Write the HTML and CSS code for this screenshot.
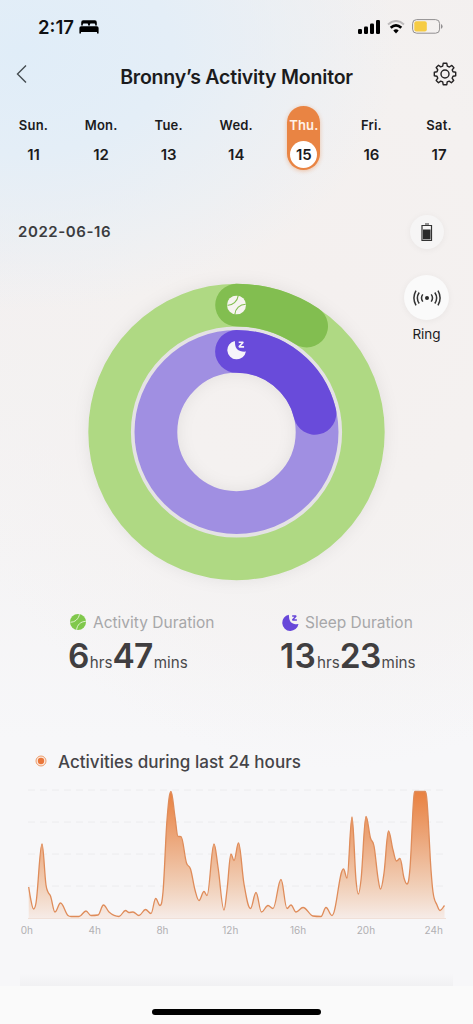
FILE: index.html
```html
<!DOCTYPE html>
<html lang="en">
<head>
<meta charset="utf-8">
<title>Bronny’s Activity Monitor</title>
<link rel="stylesheet" href="styles.css">
</head>
<body>
<svg width="0" height="0" class="defs">
  <symbol id="ball" viewBox="0 0 20 20"><circle cx="10" cy="10" r="10" fill="currentColor"/><path d="M.5 10.2C6 10.5 11 6 11.8.3M8.3 19.7C8.8 13.5 13.5 9.3 19.7 9.2" fill="none" stroke="var(--seam)" stroke-width="1.2"/></symbol>
  <symbol id="moon" viewBox="0 0 20 20"><path d="M8 .9C8.4 3 8 6.6 10.2 9.3 12.4 11.8 16 12.1 19.4 11.9A9.6 9.6 0 1 1 8 .9Z" fill="currentColor"/><path d="M12 2.3h4.6l-4.3 4.8h5.2" fill="none" stroke="currentColor" stroke-width="1.7" stroke-linejoin="bevel"/></symbol>
</svg>
<main class="screen">
  <header class="status">
    <div class="clock"><span>2:17</span>
      <svg width="20" height="14" viewBox="0 0 20 14"><path d="M2.2 5.6V2.5Q2.2.3 4.2.3H15.8Q17.8.3 17.8 2.5V5.6H16.2V4.4Q16.2 3.5 15.3 3.5H11.8Q10.9 3.5 10.9 4.4V5.6H9.1V4.4Q9.1 3.5 8.2 3.5H4.7Q3.8 3.5 3.8 4.4V5.6ZM2.2 6.2H17.8Q19.6 6.2 19.6 8V13.4H18V11.9H2V13.4H.4V8Q.4 6.2 2.2 6.2Z"/></svg>
    </div>
    <div class="signals">
      <svg width="22" height="15" viewBox="0 0 22 15"><rect y="9" width="4" height="5" rx="1.2"/><rect x="6" y="6.5" width="4" height="7.5" rx="1.2"/><rect x="12" y="3.5" width="4" height="10.5" rx="1.2"/><rect x="18" y="0" width="4" height="14" rx="1.2"/></svg>
      <svg width="18" height="14" viewBox="0 0 18 14" fill="none"><path d="M1 4.5Q9-2.5 17 4.5" stroke="#bdbabb" stroke-width="2"/><path d="M3.7 7.7Q9 3 14.3 7.7" stroke="#000" stroke-width="2.7"/><path d="M6.3 10.5Q9 8.2 11.7 10.5L9 13.6Z" fill="#000"/></svg>
      <svg width="31" height="15" viewBox="0 0 31 15"><rect x=".6" y=".6" width="27" height="13.6" rx="4" fill="none" stroke="#918f90" stroke-width="1"/><rect x="2.3" y="2.3" width="12.5" height="10.2" rx="2" fill="#f6cc45"/><path d="M29 5Q30.6 5.6 30.6 7.4T29 9.8Z" fill="#918f90"/></svg>
    </div>
  </header>
  <nav class="titlebar">
    <svg width="12" height="20" viewBox="0 0 12 20"><path d="M10 1.5 1.5 10 10 18.5" fill="none" stroke="#444c50" stroke-width="1.4"/></svg>
    <h1>Bronny’s Activity Monitor</h1>
    <svg width="24" height="24" viewBox="0 0 24 24" fill="none" stroke="#242223" stroke-width="1.4" stroke-linejoin="round"><circle cx="12" cy="12" r="4"/><path d="M10.2 1.3H13.8L14.3 4.1 16.4 5 18.8 3.4 20.9 5.7 19.2 7.9 20 9.8 22.7 10.3V13.7L20 14.2 19.1 16.2 20.7 18.5 18.4 20.7 16.2 19.1 14.2 19.9 13.8 22.7H10.2L9.7 19.9 7.7 19.1 5.5 20.7 3.2 18.4 4.8 16.2 4 14.2 1.3 13.7V10.3L4 9.8 4.8 7.8 3.2 5.5 5.5 3.3 7.7 4.9 9.7 4.1Z"/></svg>
  </nav>
  <section class="week">
    <div class="day"><span>Sun.</span><b>11</b></div>
    <div class="day"><span>Mon.</span><b>12</b></div>
    <div class="day"><span>Tue.</span><b>13</b></div>
    <div class="day"><span>Wed.</span><b>14</b></div>
    <div class="day active"><span>Thu.</span><b>15</b></div>
    <div class="day"><span>Fri.</span><b>16</b></div>
    <div class="day"><span>Sat.</span><b>17</b></div>
  </section>
  <section class="overview">
    <time>2022-06-16</time>
    <svg class="rings" width="300" height="300" viewBox="-150 -150 300 300" fill="none">
      <circle r="104" stroke="#e4e2e4" stroke-width="5"/>
      <circle r="126.9" stroke="#afd983" stroke-width="42.6"/>
      <circle r="80.6" stroke="#a08fe2" stroke-width="42.8"/>
      <path d="M0-126.9A126.9 126.9 0 0 1 70.2-105.8" stroke="#82be50" stroke-width="42.6" stroke-linecap="round"/>
      <path d="M0-80.6A80.6 80.6 0 0 1 78.4-18.7" stroke="#694bda" stroke-width="42.8" stroke-linecap="round"/>
      <g class="on-green"><use href="#ball" x="-9.5" y="-136.5" width="19" height="19"/></g>
      <g class="on-purple"><use href="#moon" x="-9.5" y="-92" width="19.5" height="19.5"/></g>
    </svg>
    <aside class="tools">
      <div class="tool small"><svg width="12" height="19" viewBox="0 0 12 19"><path d="M4 1H8M1 2.5H10.5V17.5H1Z" fill="none" stroke="#333" stroke-width="1.2"/><path d="M2 6.5H9.5V16.4H2Z" fill="#292929"/></svg></div>
      <div class="tool"><svg width="28" height="18" viewBox="-14 -9 28 18" fill="none" stroke="#343434" stroke-width="1.5"><circle r="2" fill="#292929" stroke="none"/><path d="M-4.2-3.6Q-6.8 0-4.2 3.6M-7.8-5.5Q-11.5 0-7.8 5.5M-11-7.3Q-15.2 0-11 7.3M4.2-3.6Q6.8 0 4.2 3.6M7.8-5.5Q11.5 0 7.8 5.5M11-7.3Q15.2 0 11 7.3"/></svg></div>
      <span>Ring</span>
    </aside>
  </section>
  <section class="totals">
    <div class="total activity"><h2><svg width="16" height="16"><use href="#ball"/></svg><span>Activity Duration</span></h2><p><b>6</b><i>hrs</i><b>47</b><i class="mins">mins</i></p></div>
    <div class="total sleep"><h2><svg width="17" height="17"><use href="#moon"/></svg><span>Sleep Duration</span></h2><p><b>13</b><i>hrs</i><b>23</b><i class="mins">mins</i></p></div>
  </section>
  <section class="chart">
    <h2><svg width="12" height="12" viewBox="0 0 12 12"><circle cx="6" cy="6" r="5" fill="#fbe9df" stroke="#ee9c6a"/><circle cx="6" cy="6" r="3.2" fill="#e9763a"/></svg><span>Activities during last 24 hours</span></h2>
    <svg class="plot" width="418" height="134" viewBox="28 787 418 134">
      <defs><linearGradient id="fill" gradientUnits="userSpaceOnUse" x1="0" y1="791" x2="0" y2="919"><stop stop-color="#e9803f"/><stop offset=".4" stop-color="#ecaa80"/><stop offset=".75" stop-color="#f1d0b9"/><stop offset="1" stop-color="#f6ece8"/></linearGradient></defs>
      <path d="M28 790H446M28 822H446M28 854H446M28 886H446" stroke="#ececee" stroke-dasharray="7 5"/>
      <path id="area" fill="url(#fill)"/><path d="M28 918.5H446" stroke="#f0e0d8"/>
      <path id="line" fill="none" stroke="#df8c5a" stroke-width="1.3"/>
    </svg>
    <div class="axis"><span>0h</span><span>4h</span><span>8h</span><span>12h</span><span>16h</span><span>20h</span><span>24h</span></div>
  </section>
  <div class="next-edge"></div>
  <footer><div class="home"></div></footer>
</main>
<script src="chart.js"></script>
</body>
</html>
```
FILE: styles.css
```css
* { box-sizing: border-box; }
body { margin: 0; font-family: Inter, "Liberation Sans", sans-serif; color: #1b1b1d; }
h1, h2, p { margin: 0; }
i { font-style: normal; }
svg { display: block; flex: none; }
.defs { position: absolute; }
.screen { width: 473px; height: 1024px; overflow: hidden; display: flex; flex-direction: column;
  background: radial-gradient(ellipse 380px 260px at 20px 50px, #e0edf8 0%, #e4eef7 40%, #eaf0f600 100%), radial-gradient(ellipse 420px 480px at 330px 290px, #f4f0ef 0%, #f4f1f0 45%, #f7f7f900 100%), linear-gradient(#f2efef 0, #f2efef 200px, #f5f4f5 560px, #f7f7f9 740px); }
.status { height: 50px; padding: 17px 30px 0 38px; display: flex; justify-content: space-between; }
.clock { display: flex; gap: 5px; font-size: 18.5px; line-height: 21px; font-weight: 600; color: #101114; letter-spacing: 0; }
.clock svg { margin-top: 3px; }
.signals { display: flex; gap: 7px; padding-top: 3px; }
.signals svg:last-child { margin-top: -1px; }
.titlebar { height: 55px; padding: 0 16px; display: flex; align-items: center; justify-content: space-between; padding-bottom: 7px; }
.titlebar h1 { font-size: 19.5px; font-weight: 600; letter-spacing: -.2px; line-height: 28px; padding-top: 5px; margin-left: 12px; }
.week { height: 80px; display: grid; grid-template-columns: repeat(7, 33px); column-gap: 34.6px; padding: 1px 0 0 17px; }
.day { height: 64px; border-radius: 17px; display: flex; flex-direction: column; align-items: center; padding-top: 10px; white-space: nowrap; }
.day span { font-size: 13px; font-weight: 600; line-height: 18px; letter-spacing: .2px; }
.day b { width: 27px; height: 27px; margin-top: 7px; border-radius: 50%; text-align: center; font-size: 15px; font-weight: 600; line-height: 27px; }
.day.active { background: #e98443; box-shadow: 0 1px 4px #e9844370; }
.day.active span { color: #fff2e9; }
.day.active b { background: #fff; }
.overview { height: 422px; display: grid; grid-template-columns: 86px 300px 87px; padding-top: 29px; }
.overview time { padding: 8px 0 0 18px; font-size: 15px; line-height: 20px; font-weight: 600; color: #3b3c3f; white-space: nowrap; letter-spacing: .58px; }
.rings { margin-top: 68px; margin-left: .5px; filter: drop-shadow(0 0 8px #00000012); transform: translateX(-.5px); }
.on-green { color: #f6f4f0; --seam: #82be50; }
.on-purple { color: #f6f4fa; }
.tools { display: flex; flex-direction: column; align-items: center; padding: 1px 6px 0 0; }
.tool { width: 45px; height: 45px; border-radius: 50%; background: #fafafa; box-shadow: 0 1px 7px #0000000d; display: grid; place-items: center; }
.tool.small { width: 34px; height: 34px; margin-bottom: 26px; background: #f6f5f5; }
.tools span { font-size: 13.5px; line-height: 18px; margin-top: 5px; }
.totals { height: 139px; padding: 4px 0 0 68px; display: grid; grid-template-columns: 212px 160px; }
.total h2 { display: flex; align-items: center; height: 22px; gap: 7px; padding-left: 2px; font-size: 15.5px; font-weight: 400; color: #a7a7a9; white-space: nowrap; }
.activity { --seam: #e3f4d5; }
.activity h2 svg { color: #80c84c; }
.sleep h2 { gap: 6px; }
.sleep h2 svg { color: #6747d9; }
.total p { display: flex; align-items: baseline; line-height: 40px; margin-top: 3px; color: #403e40; white-space: nowrap; }
.total b { font-size: 33.5px; font-weight: 600; letter-spacing: -.7px; }
.sleep b:first-child { letter-spacing: .3px; }
.total i { font-size: 15.2px; color: #4a494b; margin-left: 1px; }
.total .mins { margin-left: 1px; }
.chart { height: 228px; padding-top: 1px; }
.chart h2 { display: flex; align-items: center; gap: 11px; height: 28px; padding-left: 35px; font-size: 17.05px; font-weight: 500; color: #454448; }
.plot { margin: 12px 0 0 28px; }
.axis { display: grid; grid-template-columns: repeat(7, 67.8px); margin-left: -7px; padding-top: 2px; font-size: 10px; line-height: 14px; color: #b1b0b3; text-align: center; }
.next-edge { height: 12px; margin: 0 20px; background: linear-gradient(#f7f7f900, #f1f1f3); }
footer { flex: 1; background: #fafafa; display: flex; justify-content: center; padding-top: 23px; }
.home { width: 169px; height: 6px; border-radius: 3px; background: #000; }
```
FILE: chart.js
```js
const samples = [
  [28.7,887],[30.5,898],[33.5,909],[36,903],[42,844],[46,885],[48,892],[50.5,896],[55,912],[60.5,903],[68,915.5],[71,916.5],[79,916.5],
  [86,911],[91,915.5],[98,915],[103.5,905],[109,912],[119,916.5],[125.5,910.5],[129,912.5],[133,912],[139,915.5],[145.5,909.5],[151,913.5],
  [155.7,898.5],[160,905.5],[163,892],[167,820],[171,791.5],[175,817],[178,836.4],[181,836.6],[186.5,863],[190.5,869],[195,890],[199,900.5],
  [204,891.5],[207,895.5],[214,844],[218,867],[224,910],[227,890],[231,854],[234,860.5],[238.5,843],[244,884],[250.5,908.5],[256,892.5],
  [261.5,912],[268,905.5],[273,908.5],[281,879.5],[287,908.5],[291,905],[296,912],[303,907.5],[313,916],[321,916.5],[326,907.5],[332,915.5],
  [343.5,869],[347,878],[352,817],[356,880],[358.3,894],[361,880],[366,816.5],[370.5,838],[374,846],[378,878],[380.5,889],[384,873],
  [388.5,831],[393,850],[396.5,861],[400,858.5],[404,878],[407,884],[410,868],[414,795],[415,791.5],[425,791.5],[426.5,796],[431,870],
  [433,892],[437,905],[440,910.5],[444.5,905.5]
];

// Flat tangents at peaks and clamped ones elsewhere keep the curve from overshooting.
const slope = (a, b) => (b[1] - a[1]) / (b[0] - a[0]);
const tangents = samples.map((p, i) => {
  if (i === 0) return slope(p, samples[1]);
  if (i === samples.length - 1) return slope(samples[i - 1], p);
  const a = slope(samples[i - 1], p), b = slope(p, samples[i + 1]);
  if (a * b <= 0) return 0;
  return Math.sign(a) * Math.min(Math.abs(a + b) / 2, 2.5 * Math.abs(a), 2.5 * Math.abs(b));
});
let d = `M${samples[0]}`;
for (let i = 1; i < samples.length; i++) {
  const p = samples[i - 1], q = samples[i], h = (q[0] - p[0]) * 0.38;
  d += `C${p[0] + h},${p[1] + tangents[i - 1] * h} ${q[0] - h},${q[1] - tangents[i] * h} ${q}`;
}
document.getElementById('line').setAttribute('d', d);
document.getElementById('area').setAttribute('d', d + 'V919H28.7Z');
```
